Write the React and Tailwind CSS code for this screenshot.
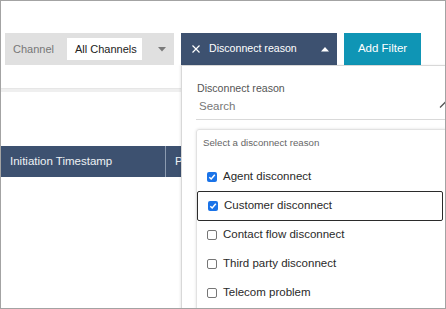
import React from "react";

function Check({ checked }) {
  if (checked) {
    return (
      <span className="w-[10px] h-[10px] rounded-[2px] bg-[#1a73e8] flex items-center justify-center shrink-0">
        <svg width="8" height="8" viewBox="0 0 8 8">
          <path d="M1.3 4.2 L3.2 6 L6.8 1.8" fill="none" stroke="#fff" strokeWidth="1.5" />
        </svg>
      </span>
    );
  }
  return <span className="w-[10px] h-[10px] rounded-[2px] border border-[#767676] bg-white shrink-0" />;
}

const items = [
  { label: "Agent disconnect", checked: true },
  { label: "Customer disconnect", checked: true, active: true },
  { label: "Contact flow disconnect", checked: false },
  { label: "Third party disconnect", checked: false },
  { label: "Telecom problem", checked: false },
];

export default function App() {
  return (
    <div
      className="relative w-[446px] h-[309px] border border-[#a3a3a3] bg-white overflow-hidden"
      style={{ fontFamily: '"Liberation Sans", Arial, sans-serif' }}
    >
      {/* toolbar */}
      <div className="flex mt-[32px] pl-[4px] h-[32px] gap-[7px]">
        <div className="w-[169px] h-full bg-[#e0e0e0] flex items-center pl-[8px]">
          <span className="text-[11px] text-[#777] w-[54px]">Channel</span>
          <div className="w-[75px] h-[22px] bg-white flex items-center pl-[8px] text-[11px] text-[#222]">
            All Channels
          </div>
          <svg className="ml-[16px]" width="8" height="5" viewBox="0 0 8 5">
            <path d="M0 0 H8 L4 4.5 Z" fill="#7a7a7a" />
          </svg>
        </div>
        <div className="w-[156px] h-full bg-[#3d5170] flex items-center pl-[11px] text-white">
          <svg width="8" height="8" viewBox="0 0 8 8">
            <path d="M0.5 0.5 L7.5 7.5 M7.5 0.5 L0.5 7.5" stroke="#fff" strokeWidth="1.2" />
          </svg>
          <span className="ml-[9px] text-[10.6px]">Disconnect reason</span>
          <svg className="ml-[24px]" width="8" height="5" viewBox="0 0 8 5">
            <path d="M0 4.5 H8 L4 0 Z" fill="#fff" />
          </svg>
        </div>
        <div className="w-[77px] h-full bg-[#0f95b5] flex items-center justify-center text-white text-[11.5px]">
          Add Filter
        </div>
      </div>

      {/* band */}
      <div className="mt-[23px] h-[4px] bg-[#efefef] border-t border-[#e6e6e6]" />

      {/* table header */}
      <div className="mt-[54px] h-[31px] bg-[#3d5170] flex items-center text-[11.5px] text-[#eef1f5]">
        <div className="w-[165px] h-full flex items-center pl-[9px] border-r border-[#8c9bb0]">
          Initiation Timestamp
        </div>
        <div className="pl-[9px]">Party</div>
      </div>

      {/* dropdown panel */}
      <div className="absolute left-[180px] top-[64px] w-[290px] h-[260px] bg-white border-l border-t border-[#d8d8d8] shadow-[-1px_0_2px_rgba(0,0,0,0.08)] z-10">
        <div className="pl-[15px] pt-[15px] text-[10.6px] text-[#555] leading-[14px]">Disconnect reason</div>
        <div className="ml-[14px] mt-[1px] h-[24px] pb-[1px] border-b border-[#d9d9d9] flex items-center pl-[3px] relative">
          <span className="text-[11.5px] text-[#777]">Search</span>
          <svg className="absolute left-[243px] top-[5px]" width="12" height="8" viewBox="0 0 12 8">
            <path d="M1 6.5 L6 1.5 L11 6.5" fill="none" stroke="#555" strokeWidth="1.3" />
          </svg>
        </div>
        <div className="ml-[14px] mt-[9px] w-[252px] rounded-[3px] border border-[#e2e2e2] shadow-[0_0_3px_rgba(0,0,0,0.12)] pb-[20px]">
          <div className="pl-[6px] pt-[6px] h-[32px] text-[9.7px] text-[#666]">Select a disconnect reason</div>
          <div className="flex flex-col">
            {items.map((it) => (
              <div
                key={it.label}
                className={
                  "h-[29px] flex items-center pl-[10px] mr-[4px] text-[11.5px] text-[#2a2a2a] " +
                  (it.active ? "border border-[#2b2b2b] rounded-[2px] pl-[9px] h-[30px] -my-[0.5px]" : "")
                }
              >
                <Check checked={it.checked} />
                <span className="ml-[6px]">{it.label}</span>
              </div>
            ))}
          </div>
        </div>
      </div>
    </div>
  );
}
